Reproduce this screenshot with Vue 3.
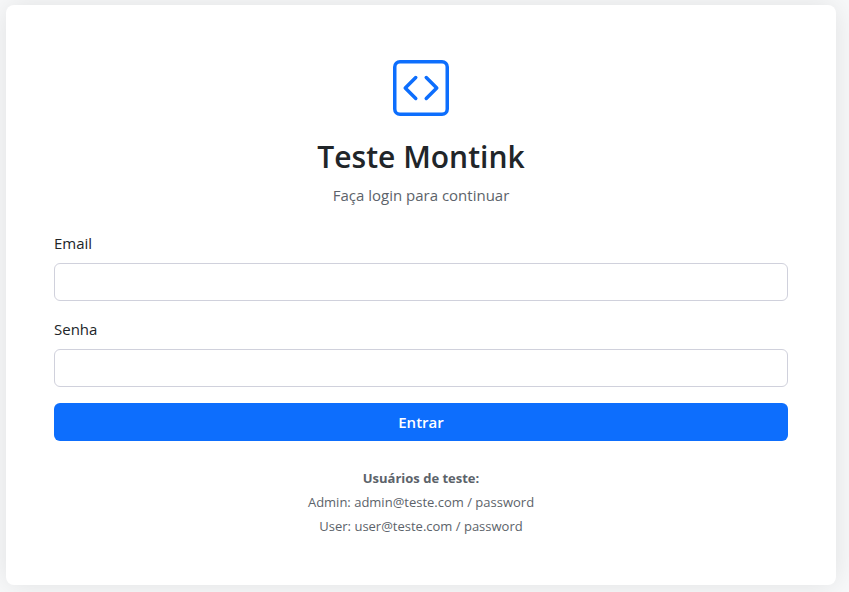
<script setup>
import { ref } from 'vue'

const email = ref('')
const password = ref('')
const testUsers = [
  { role: 'Admin', email: 'admin@teste.com', password: 'password' },
  { role: 'User', email: 'user@teste.com', password: 'password' },
]
</script>

<template>
  <main class="page">
    <section class="card">
      <header class="intro">
        <svg class="logo" viewBox="0 0 16 16" fill="currentColor" aria-hidden="true">
          <path d="M14 1a1 1 0 0 1 1 1v12a1 1 0 0 1-1 1H2a1 1 0 0 1-1-1V2a1 1 0 0 1 1-1zM2 0a2 2 0 0 0-2 2v12a2 2 0 0 0 2 2h12a2 2 0 0 0 2-2V2a2 2 0 0 0-2-2z" />
          <path d="M6.854 4.646a.5.5 0 0 1 0 .708L4.207 8l2.647 2.646a.5.5 0 0 1-.708.708l-3-3a.5.5 0 0 1 0-.708l3-3a.5.5 0 0 1 .708 0m2.292 0a.5.5 0 0 0 0 .708L11.793 8l-2.647 2.646a.5.5 0 0 0 .708.708l3-3a.5.5 0 0 0 0-.708l-3-3a.5.5 0 0 0-.708 0" />
        </svg>
        <h1>Teste Montink</h1>
        <p>Faça login para continuar</p>
      </header>

      <form @submit.prevent>
        <div class="field">
          <label for="email">Email</label>
          <input id="email" v-model="email" type="email" autocomplete="username" />
        </div>
        <div class="field">
          <label for="password">Senha</label>
          <input id="password" v-model="password" type="password" autocomplete="current-password" />
        </div>
        <button type="submit">Entrar</button>
      </form>

      <footer class="hints">
        <strong>Usuários de teste:</strong>
        <span v-for="user in testUsers" :key="user.role">{{ user.role }}: {{ user.email }} / {{ user.password }}</span>
      </footer>
    </section>
  </main>
</template>

<style>
body {
  background: #f8f9fa;
}
</style>

<style scoped>
.page {
  padding: 5px 13px 7px 6px;
  font-family: "Segoe UI", "Open Sans", "Noto Sans", sans-serif;
  font-size: 15px;
  line-height: 24px;
  color: #212529;
}

.card {
  padding: 55px 48px 47px;
  border-radius: 8px;
  background: #fff;
  box-shadow: 0 0 30px rgba(0, 0, 0, 0.1);
}

.intro {
  display: flex;
  flex-direction: column;
  align-items: center;
  margin-bottom: 24px;
  text-align: center;
}

.logo {
  width: 56px;
  height: 56px;
  color: #0d6efd;
}

h1 {
  margin: 22px 0 7px;
  font-size: 30px;
  font-weight: 600;
  line-height: 38px;
}

.intro p {
  margin: 0;
  color: #5c636a;
}

form {
  display: flex;
  flex-direction: column;
  gap: 16px;
}

.field {
  display: flex;
  flex-direction: column;
  align-items: flex-start;
  gap: 8px;
}

input {
  box-sizing: border-box;
  width: 100%;
  height: 38px;
  padding: 6px 12px;
  border: 1px solid #d0d1dc;
  border-radius: 6px;
  background: #fff;
  color: inherit;
  font: inherit;
}

button {
  height: 38px;
  padding: 0 12px;
  border: 0;
  border-radius: 6px;
  background: #0d6efd;
  color: #fff;
  font: inherit;
  font-weight: 600;
  cursor: pointer;
}

.hints {
  display: flex;
  flex-direction: column;
  margin-top: 25px;
  color: #5c636a;
  font-size: 13px;
  text-align: center;
}

strong {
  font-weight: 700;
}
</style>
